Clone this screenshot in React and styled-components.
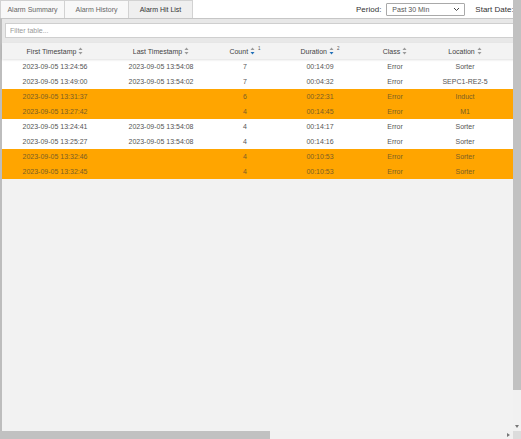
import React from "react";
import styled, { createGlobalStyle } from "styled-components";

const GlobalStyle = createGlobalStyle`
  html, body {
    margin: 0;
    padding: 0;
    background: #ffffff;
    font-family: "Liberation Sans", Arial, sans-serif;
    overflow: hidden;
  }
`;

const Frame = styled.div`
  width: 100vw;
  height: 100vh;
  display: grid;
  grid-template-columns: 1fr 8px;
  grid-template-rows: 1fr 8px;
  background: #ffffff;
`;

const Viewport = styled.div`
  overflow: hidden;
  min-width: 0;
  min-height: 0;
`;

const VBar = styled.div`
  background: #f1f1f1;
  display: flex;
  flex-direction: column;
  align-items: center;
`;

const VThumb = styled.div`
  width: 100%;
  height: 390px;
  background: #c1c1c1;
`;

const HBar = styled.div`
  background: #f1f1f1;
  display: flex;
  align-items: center;
`;

const HThumb = styled.div`
  width: 270px;
  height: 100%;
  background: #c1c1c1;
`;

const Corner = styled.div`
  background: #dcdcdc;
`;

const ArrowSlot = styled.div`
  margin: ${(p) => (p.vertical ? "auto 0 3px 0" : "0 3px 0 auto")};
  display: flex;
`;

const Page = styled.div`
  width: 975px;
  height: 476px;
  display: flex;
  flex-direction: column;
`;

const Toolbar = styled.div`
  height: 18px;
  display: flex;
  align-items: stretch;
  background: #ffffff;
`;

const Tab = styled.div`
  width: 65px;
  box-sizing: border-box;
  display: flex;
  align-items: center;
  justify-content: center;
  font-size: 7px;
  color: ${(p) => (p.active ? "#333" : "#666")};
  background: ${(p) => (p.active ? "#efefef" : "#f8f8f8")};
  border: 1px solid #d2d2d2;
  border-bottom: none;
  margin-right: -1px;
`;

const PeriodGroup = styled.div`
  margin-left: 164px;
  display: flex;
  align-items: center;
  gap: 5px;
`;

const Label = styled.span`
  font-size: 8px;
  color: #333;
  white-space: nowrap;
`;

const SelectBox = styled.div`
  width: 79px;
  height: 13px;
  box-sizing: border-box;
  border: 1px solid #a9a9a9;
  border-radius: 1px;
  background: #fff;
  display: flex;
  align-items: center;
  justify-content: space-between;
  padding: 0 4px 0 5px;
  font-size: 7px;
  color: #555;
  margin-right: 5px;
`;

const Panel = styled.div`
  flex: 1;
  display: flex;
  flex-direction: column;
  background: #f2f2f2;
  border-top: 1px solid #c6c6c6;
  border-left: 2px solid #bdbdbd;
  box-shadow: inset 0 1px 0 #dadada;
`;

const FilterBar = styled.div`
  background: #e8e8e8;
  padding: 4px 0 5px 3px;
`;

const FilterInput = styled.input`
  display: block;
  width: 100%;
  height: 15px;
  box-sizing: border-box;
  border: 1px solid #cfcfcf;
  background: #fff;
  font-family: "Liberation Sans", Arial, sans-serif;
  font-size: 7px;
  color: #555;
  padding: 0 4px;
  outline: none;
  &::placeholder {
    color: #9a9a9a;
  }
`;

const cols = "106px 106px 62px 88px 62px 78px 1fr";

const HeaderRow = styled.div`
  display: grid;
  grid-template-columns: ${cols};
  height: 16px;
  background: #f3f3f3;
  box-shadow: 0 1px 2px rgba(0, 0, 0, 0.12);
  position: relative;
  z-index: 1;
`;

const HeaderCell = styled.div`
  display: flex;
  align-items: center;
  justify-content: center;
  gap: 2px;
  font-size: 7px;
  color: #444;
  white-space: nowrap;
`;

const SortRank = styled.sup`
  font-size: 4.5px;
  color: #555;
  margin-left: 1px;
  align-self: flex-start;
  margin-top: 3px;
`;

const Row = styled.div`
  display: grid;
  grid-template-columns: ${cols};
  height: 15px;
  background: ${(p) => (p.$alert ? "#ffa500" : "#ffffff")};
  color: ${(p) => (p.$alert ? "#7a5e26" : "#555")};
`;

const Cell = styled.div`
  display: flex;
  align-items: center;
  justify-content: center;
  font-size: 7px;
  white-space: nowrap;
`;

function SortIcon({ sorted }) {
  return (
    <svg width="5" height="8" viewBox="0 0 5 8">
      <path d="M2.5 0.5 L4.5 3 L0.5 3 Z" fill="#9a9a9a" />
      <path d="M0.5 5 L4.5 5 L2.5 7.5 Z" fill={sorted ? "#1f6fb8" : "#9a9a9a"} />
    </svg>
  );
}

function Chevron() {
  return (
    <svg width="7" height="5" viewBox="0 0 7 5">
      <path d="M1 1 L3.5 3.5 L6 1" fill="none" stroke="#444" strokeWidth="1" />
    </svg>
  );
}

function ArrowDown() {
  return (
    <svg width="4" height="3" viewBox="0 0 4 3">
      <path d="M0 0 L4 0 L2 3 Z" fill="#777" />
    </svg>
  );
}

function ArrowRight() {
  return (
    <svg width="3" height="4" viewBox="0 0 3 4">
      <path d="M0 0 L3 2 L0 4 Z" fill="#777" />
    </svg>
  );
}

const headers = [
  { label: "First Timestamp" },
  { label: "Last Timestamp" },
  { label: "Count", rank: 1 },
  { label: "Duration", rank: 2 },
  { label: "Class" },
  { label: "Location" },
];

const rows = [
  ["2023-09-05 13:24:56", "2023-09-05 13:54:08", "7", "00:14:09", "Error", "Sorter", false],
  ["2023-09-05 13:49:00", "2023-09-05 13:54:02", "7", "00:04:32", "Error", "SEPC1-RE2-5", false],
  ["2023-09-05 13:31:37", "", "6", "00:22:31", "Error", "Induct", true],
  ["2023-09-05 13:27:42", "", "4", "00:14:45", "Error", "M1", true],
  ["2023-09-05 13:24:41", "2023-09-05 13:54:08", "4", "00:14:17", "Error", "Sorter", false],
  ["2023-09-05 13:25:27", "2023-09-05 13:54:08", "4", "00:14:16", "Error", "Sorter", false],
  ["2023-09-05 13:32:46", "", "4", "00:10:53", "Error", "Sorter", true],
  ["2023-09-05 13:32:45", "", "4", "00:10:53", "Error", "Sorter", true],
];

export default function App() {
  return (
    <Frame>
      <GlobalStyle />
      <Viewport>
        <Page>
          <Toolbar>
            <Tab>Alarm Summary</Tab>
            <Tab>Alarm History</Tab>
            <Tab active>Alarm Hit List</Tab>
            <PeriodGroup>
              <Label>Period:</Label>
              <SelectBox>
                <span>Past 30 Min</span>
                <Chevron />
              </SelectBox>
              <Label>Start Date:</Label>
            </PeriodGroup>
          </Toolbar>
          <Panel>
            <FilterBar>
              <FilterInput placeholder="Filter table..." />
            </FilterBar>
            <HeaderRow>
              {headers.map((h) => (
                <HeaderCell key={h.label}>
                  {h.label}
                  <SortIcon sorted={!!h.rank} />
                  {h.rank && <SortRank>{h.rank}</SortRank>}
                </HeaderCell>
              ))}
              <HeaderCell />
            </HeaderRow>
            {rows.map((r, i) => (
              <Row key={i} $alert={r[6]}>
                {r.slice(0, 6).map((v, j) => (
                  <Cell key={j}>{v}</Cell>
                ))}
                <Cell />
              </Row>
            ))}
          </Panel>
        </Page>
      </Viewport>
      <VBar>
        <VThumb />
        <ArrowSlot vertical>
          <ArrowDown />
        </ArrowSlot>
      </VBar>
      <HBar>
        <HThumb />
        <ArrowSlot>
          <ArrowRight />
        </ArrowSlot>
      </HBar>
      <Corner />
    </Frame>
  );
}
